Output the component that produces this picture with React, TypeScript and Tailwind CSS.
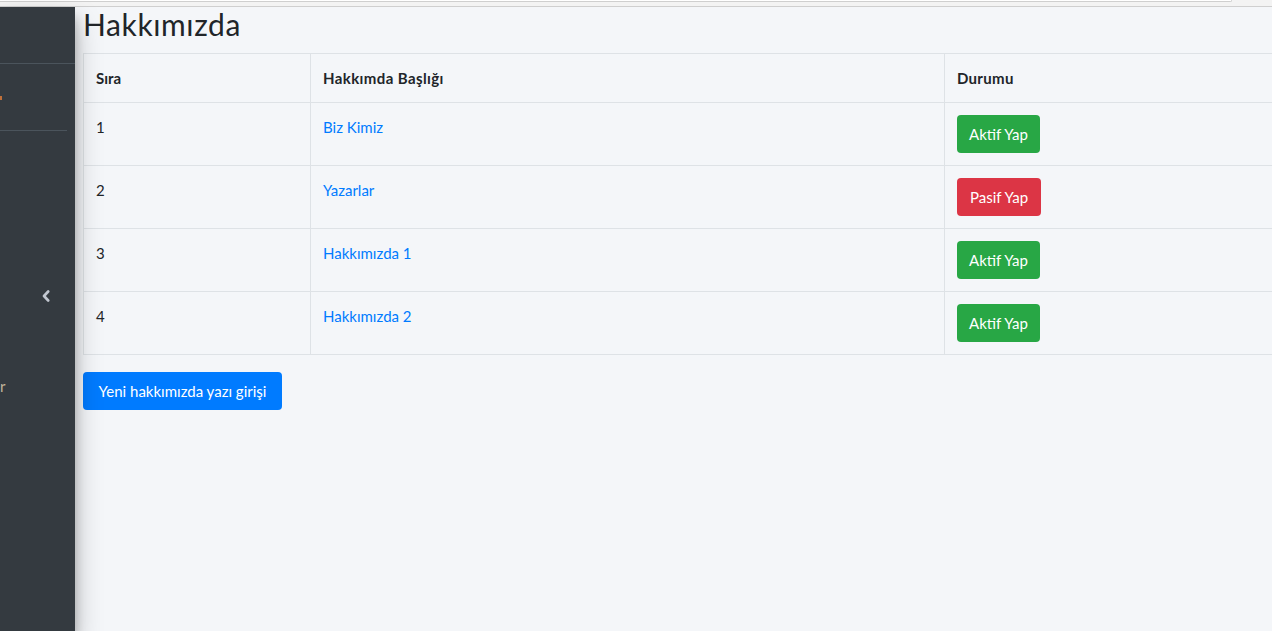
const rows = [
  { id: 1, title: "Biz Kimiz", active: false },
  { id: 2, title: "Yazarlar", active: true },
  { id: 3, title: "Hakkımızda 1", active: false },
  { id: 4, title: "Hakkımızda 2", active: false },
];

function AngleLeft() {
  return (
    <svg width="8" height="12" viewBox="0 0 8 12" className="text-[#c2c7d0]">
      <polyline points="6.2,1.5 2,6 6.2,10.5" fill="none" stroke="currentColor" strokeWidth="2.6" strokeLinecap="round" strokeLinejoin="round" />
    </svg>
  );
}

export default function App() {
  return (
    <div className="w-[1272px] h-[631px] overflow-hidden flex flex-col bg-[#f4f6f9] font-['Lato','Liberation_Sans',sans-serif] text-[#212529]">
      {/* browser strip */}
      <div className="h-[7px] shrink-0 bg-[#f3f3f3] border-b border-[#cfcfcf]">
        <div className="w-[1232px] h-[2px] bg-white border-b border-r border-[#cfcfcf] rounded-br" />
      </div>

      <div className="flex flex-1 min-h-0">
        {/* sidebar */}
        <aside className="w-[75px] shrink-0 bg-[#343a40] relative z-10 shadow-[0_14px_28px_rgba(0,0,0,0.25),0_10px_10px_rgba(0,0,0,0.22)] flex flex-col">
          <div className="h-[57px] border-b border-[#4b545c]" />
          <div className="h-[67px] w-[67px] border-b border-[#4b545c] flex items-center">
            <span className="block w-[2px] h-[4px] mt-[2px] bg-[#c0703a]" />
          </div>
          <div className="h-[159px]" />
          <div className="flex justify-end pr-[25px]">
            <AngleLeft />
          </div>
          <div className="h-[72px]" />
          <div className="text-[15px] leading-[24px] text-[#c2b59b]">r</div>
        </aside>

        {/* content */}
        <main className="flex-1 min-w-0 overflow-hidden px-2">
          <h1 className="text-[30px] leading-[34px] font-normal tracking-[0.6px] mb-3">Hakkımızda</h1>

          <table className="table-fixed border-collapse w-[1250px] text-[15px] leading-[24px] mb-[17px]">
            <colgroup>
              <col className="w-[227px]" />
              <col className="w-[634px]" />
              <col />
            </colgroup>
            <thead>
              <tr>
                <th className="border border-[#dee2e6] px-3 py-3 text-left font-bold align-top">Sıra</th>
                <th className="border border-[#dee2e6] px-3 py-3 text-left font-bold align-top tracking-[0.4px]">Hakkımda Başlığı</th>
                <th className="border border-[#dee2e6] px-3 py-3 text-left font-bold align-top tracking-[0.3px]">Durumu</th>
              </tr>
            </thead>
            <tbody>
              {rows.map((r) => (
                <tr key={r.id}>
                  <td className="border border-[#dee2e6] px-3 py-3 align-top">{r.id}</td>
                  <td className="border border-[#dee2e6] px-3 py-3 align-top">
                    <a className="text-[#007bff]">{r.title}</a>
                  </td>
                  <td className="border border-[#dee2e6] px-3 py-3 align-top">
                    {r.active ? (
                      <button className="h-[38px] w-[84px] rounded bg-[#dc3545] text-white text-[15px]">
                        Pasif Yap
                      </button>
                    ) : (
                      <button className="h-[38px] w-[83px] rounded bg-[#28a745] text-white text-[15px]">
                        Aktif Yap
                      </button>
                    )}
                  </td>
                </tr>
              ))}
            </tbody>
          </table>

          <button className="h-[38px] w-[199px] rounded bg-[#007bff] text-white text-[15px]">
            Yeni hakkımızda yazı girişi
          </button>
        </main>
      </div>
    </div>
  );
}
